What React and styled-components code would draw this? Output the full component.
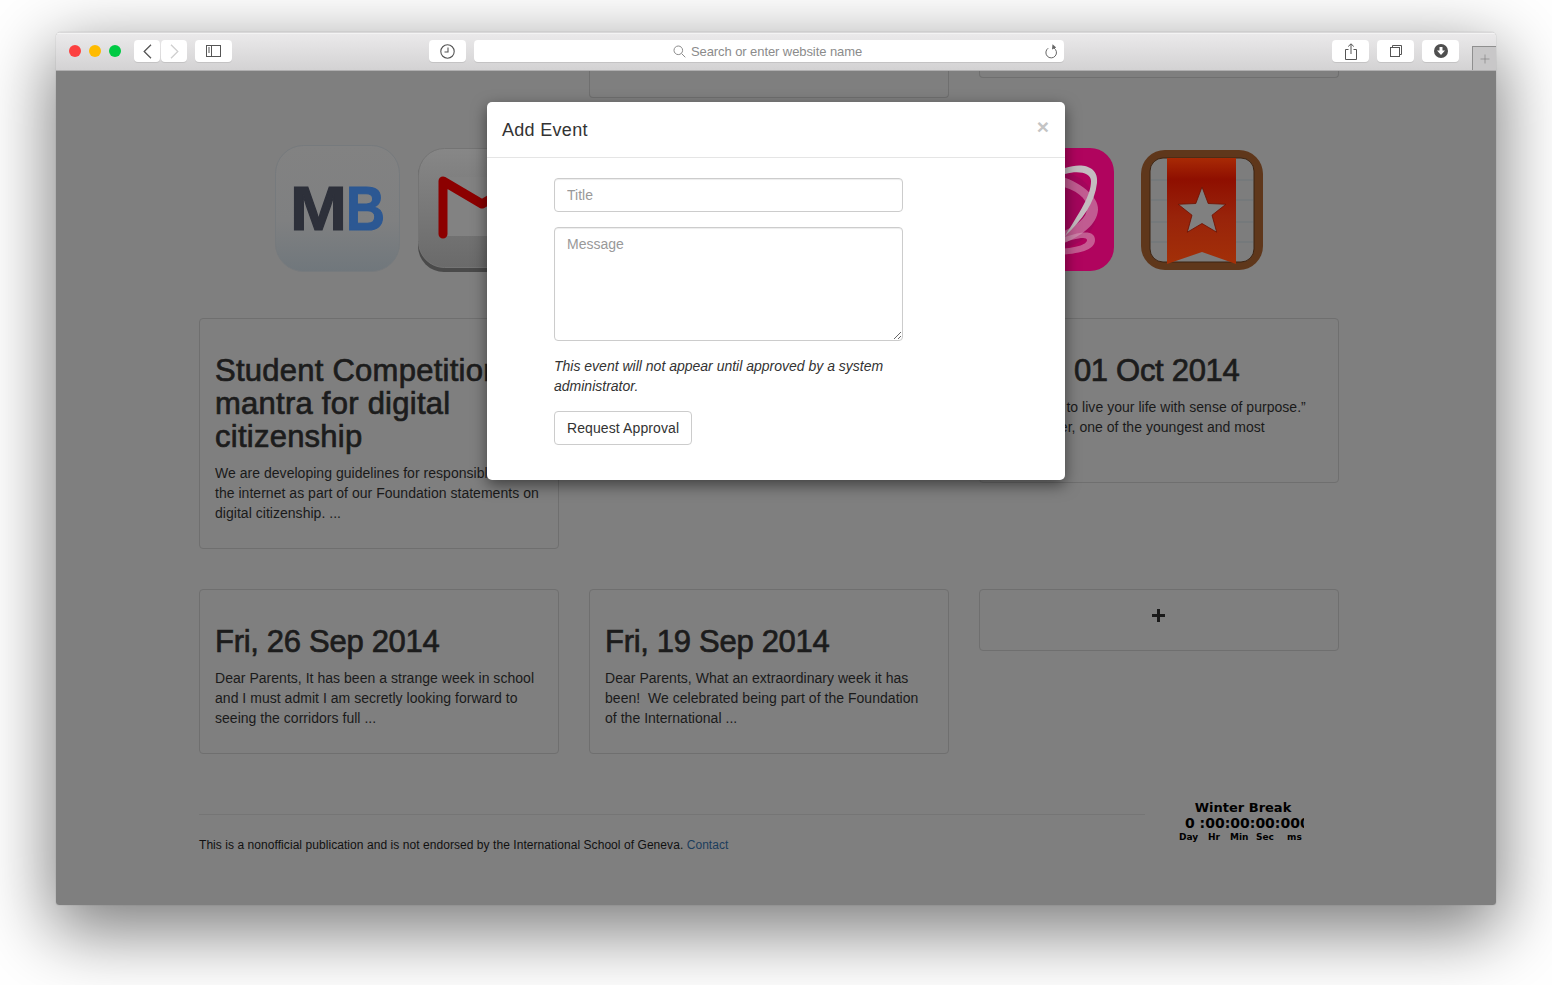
import styled, { createGlobalStyle } from "styled-components";
import { Plus } from "lucide-react";

const GlobalStyle = createGlobalStyle`
html,body{margin:0;padding:0;background:#fff;}
body{font-family:"Liberation Sans",Arial,sans-serif;}
`

const Page = styled.div`
width:1552px;
height:985px;
box-sizing:border-box;
padding:32px 56px 0;
overflow:hidden;
background:#fff;
`

const Window = styled.div`
width:1440px;
height:873px;
display:flex;
flex-direction:column;
border-radius:5px 5px 3px 3px;
box-shadow:0 22px 70px 4px rgba(0,0,0,.52), 0 0 1px rgba(0,0,0,.4);
overflow:hidden;
position:relative;
`

const TitleBar = styled.div`
height:39px;
flex:none;
box-sizing:border-box;
display:flex;
align-items:center;
padding:0 0 1px 13px;
background:linear-gradient(#ebeaeb,#d3d2d3);
border-top:1px solid #d9d8d9;
box-shadow:inset 0 1px 0 #f3f3f3;
border-bottom:1px solid #b0afb0;
`

const Lights = styled.div`
display:flex;
gap:8px;
margin-right:13px;
`

const Light = styled.span`
width:12px;
height:12px;
border-radius:50%;
background:${props=>props.color};
`

const ToolButton = styled.div`
width:${props=>props.w || 37}px;
height:22px;
margin-left:${props=>props.ml || 0}px;
display:flex;
align-items:center;
justify-content:center;
background:#fff;
border-radius:4px;
box-shadow:0 1px 0 #c4c3c4;
flex:none;
`

const UrlBar = styled.div`
width:590px;
height:22px;
margin-left:8px;
box-sizing:border-box;
padding-right:6px;
display:flex;
align-items:center;
background:#fff;
border-radius:4px;
box-shadow:0 1px 0 #c4c3c4;
flex:none;
`

const UrlText = styled.div`
flex:1;
display:flex;
align-items:center;
justify-content:center;
gap:5px;
padding-left:16px;
font-size:13px;
letter-spacing:-.08px;
color:#8b8b8b;
`

const NewTab = styled.div`
width:24px;
height:24px;
margin:0 0 -1px 13px;
align-self:flex-end;
box-sizing:border-box;
border-left:1px solid #8f8f8f;
border-top:1px solid #8f8f8f;
background:#c8c7c8;
display:flex;
align-items:center;
justify-content:center;
color:#777;
flex:none;
`

const Content = styled.div`
flex:1;
position:relative;
overflow:hidden;
background:#7f7f7f;
color:#111;
`

const Wrapper = styled.div`
width:1140px;
margin-left:143px;
`

const Grid = styled.div`
display:grid;
grid-template-columns:repeat(3,360px);
column-gap:30px;
align-items:start;
`

const ScrolledRow = styled(Grid)`
height:40px;
`

const Card = styled.div`
box-sizing:border-box;
border:1px solid #6f6f6f;
border-radius:4px;
padding:35px 15px 25px;
margin-bottom:40px;
`

const StubCard = styled.div`
box-sizing:border-box;
height:60px;
margin-top:${props=>props.top}px;
border:1px solid #6f6f6f;
border-top:0;
border-radius:0 0 4px 4px;
`

const CardTitle = styled.h2`
margin:0 0 10px;
font-size:31px;
line-height:33px;
font-weight:400;
color:#1c1c1c;
-webkit-text-stroke:.7px #1c1c1c;
letter-spacing:${props=>props.spacing || "-.3px"};
white-space:nowrap;
`

const CardText = styled.p`
margin:0;
font-size:14px;
line-height:20px;
letter-spacing:.03px;
color:#1a1a1a;
white-space:nowrap;
`

const PlusCard = styled(Card)`
height:62px;
display:flex;
align-items:center;
justify-content:center;
padding:0 1px 9px 0;
`

const IconRow = styled.div`
height:129px;
margin:34px 0 44px;
padding:0 76px;
display:flex;
justify-content:space-between;
align-items:center;
`

const IconGroup = styled.div`
display:flex;
align-items:center;
gap:${props=>props.gap}px;
`

const Footer = styled.div`
display:flex;
justify-content:space-between;
margin-top:20px;
`

const FooterLeft = styled.div`
width:946px;
border-top:1px solid #757575;
padding-top:23px;
font-size:12px;
line-height:14px;
letter-spacing:.06px;
color:#111;
`

const FooterLink = styled.a`
color:#1b3d5c;
`

const Countdown = styled.div`
width:125px;
margin:-14px 35px 0 0;
overflow:hidden;
font-family:"DejaVu Sans",Verdana,sans-serif;
font-weight:700;
color:#000;
white-space:nowrap;
text-align:center;
`

const CountTitle = styled.div`
font-size:13px;
line-height:15px;
padding-left:3px;
`

const CountValue = styled.div`
font-size:14px;
line-height:16px;
text-align:left;
padding-left:6px;
`

const CountLabels = styled.div`
margin-top:1px;
font-size:9px;
line-height:11px;
display:flex;
text-align:left;
`

const CountLabel = styled.span`
width:${props=>props.w}px;
`

const Modal = styled.div`
position:absolute;
left:431px;
top:31px;
width:578px;
height:378px;
background:#fff;
border-radius:5px;
box-shadow:0 5px 15px rgba(0,0,0,.5);
color:#333;
`

const ModalHeader = styled.div`
height:56px;
box-sizing:border-box;
border-bottom:1px solid #e5e5e5;
padding:1px 15px 0;
display:flex;
align-items:center;
justify-content:space-between;
`

const ModalTitle = styled.div`
font-size:18px;
letter-spacing:.3px;
color:#333;
`

const Close = styled.div`
font-size:21px;
font-weight:700;
line-height:1;
color:#c4c4c4;
margin:-7px 1px 0 0;
`

const ModalBody = styled.div`
width:349px;
margin-left:67px;
padding-top:20px;
`

const TextInput = styled.input`
display:block;
width:100%;
height:34px;
box-sizing:border-box;
padding:6px 12px;
border:1px solid #ccc;
border-radius:4px;
box-shadow:inset 0 1px 1px rgba(0,0,0,.075);
font:14px "Liberation Sans",Arial,sans-serif;
margin-bottom:15px;
&::placeholder{color:#999;opacity:1;}
`

const TextArea = styled.textarea`
display:block;
width:100%;
height:114px;
box-sizing:border-box;
padding:6px 12px;
border:1px solid #ccc;
border-radius:4px;
box-shadow:inset 0 1px 1px rgba(0,0,0,.075);
font:14px/20px "Liberation Sans",Arial,sans-serif;
margin:0 0 15px;
&::placeholder{color:#999;opacity:1;}
`

const Help = styled.p`
margin:0 0 15px;
font-size:14px;
line-height:20px;
font-style:italic;
color:#333;
`

const Button = styled.button`
height:34px;
box-sizing:border-box;
padding:6px 12px;
background:#fff;
border:1px solid #ccc;
border-radius:4px;
font:14px "Liberation Sans",Arial,sans-serif;
letter-spacing:.1px;
color:#333;
`

const MbIcon = () => (
  <svg width="125" height="129" viewBox="0 0 125 129">
    <defs>
      <linearGradient id="mb" x1="0" y1="0" x2="0" y2="1">
        <stop offset="0" stopColor="#828282"/>
        <stop offset=".6" stopColor="#7f8081"/>
        <stop offset="1" stopColor="#70777c"/>
      </linearGradient>
    </defs>
    <rect x=".5" y=".5" width="124" height="126" rx="28" fill="url(#mb)" stroke="#767a7d"/>
    <text x="15" y="85" fontFamily="Liberation Sans" fontWeight="700" fontSize="63" textLength="57" lengthAdjust="spacingAndGlyphs" fill="#2d303a" stroke="#2d303a" strokeWidth="1.2">M</text>
    <text x="71" y="85" fontFamily="Liberation Sans" fontWeight="700" fontSize="63" textLength="39" lengthAdjust="spacingAndGlyphs" fill="#2c5893" stroke="#2c5893" strokeWidth="1.2">B</text>
  </svg>
)

const GmailIcon = () => (
  <svg width="127" height="124" viewBox="0 0 127 124">
    <defs>
      <linearGradient id="gm" x1="0" y1="0" x2="0" y2="1">
        <stop offset="0" stopColor="#878787"/>
        <stop offset="1" stopColor="#6a6a6a"/>
      </linearGradient>
    </defs>
    <rect y="2" width="127" height="122" rx="26" fill="#4a4a4a"/>
    <rect x=".5" y=".5" width="126" height="119" rx="26" fill="url(#gm)" stroke="#747474"/>
    <rect x="25" y="29" width="78" height="59" fill="#828282"/>
    <path d="M25 86V33L64 56L103 33V86" fill="none" stroke="#8c0000" strokeWidth="9" strokeLinejoin="round" strokeLinecap="round"/>
  </svg>
)

const OrbitIcon = () => (
  <svg width="127" height="123" viewBox="0 0 127 123">
    <rect width="127" height="123" rx="24" fill="#b0045e"/>
    <circle cx="72" cy="62" r="38" fill="#a4065c"/>
    <g fill="#d8a4be" fillOpacity=".55">
      <path d="M70 27C92 33 112 48 111 62C110 76 96 88 70 98L70 86C90 78 100 70 100 60C100 50 90 42 70 37Z"/>
      <path d="M70 92C95 82 108 82 108 92C108 102 92 106 70 107L70 101C88 100 100 97 100 92C100 88 88 90 70 97Z"/>
    </g>
    <path d="M78 20C95 14 112 18 110 35C108 55 95 72 78 88C92 65 104 48 104 33C104 25 92 22 78 26Z" fill="#c4bcc0"/>
  </svg>
)

const WunderIcon = () => (
  <svg width="122" height="120" viewBox="0 0 122 120">
    <defs>
      <linearGradient id="wr" x1="0" y1="0" x2="0" y2="1">
        <stop offset="0" stopColor="#a82a05"/>
        <stop offset=".2" stopColor="#8f0f00"/>
        <stop offset=".55" stopColor="#98230a"/>
        <stop offset="1" stopColor="#a33008"/>
      </linearGradient>
    </defs>
    <rect x="0" y="0" width="122" height="120" rx="24" fill="#5f371b"/>
    <rect x="9" y="8" width="104" height="104" rx="13" fill="#7d7d7d" stroke="#3d2412"/>
    <path d="M10 30H112M10 50H112M10 72H112M10 92H112" stroke="#6f767b"/>
    <path d="M26 8H95V114L61 102L26 114Z" fill="url(#wr)"/>
    <path d="M61 37L67.2 53.5L84.8 54.3L71 65.2L75.7 82.2L61 73.5L46.3 82.2L51 65.2L37.2 54.3L54.8 53.5Z" fill="#808080" stroke="#6d0f00" strokeWidth=".8"/>
  </svg>
)

const BackGlyph = ({ color }) => (
  <svg width="9" height="15" viewBox="0 0 9 15" fill="none" stroke={color} strokeWidth="1.3">
    <path d="M8 .7L1.2 7.5L8 14.3"/>
  </svg>
)

const ForwardGlyph = ({ color }) => (
  <svg width="9" height="15" viewBox="0 0 9 15" fill="none" stroke={color} strokeWidth="1.3">
    <path d="M1 .7L7.8 7.5L1 14.3"/>
  </svg>
)

const SidebarGlyph = () => (
  <svg width="15" height="12" viewBox="0 0 15 12" fill="none" stroke="#555">
    <rect x=".5" y=".5" width="14" height="11"/>
    <path d="M5.5 .5V11.5M2 3H4M2 5H4M2 7H4"/>
  </svg>
)

const ClockGlyph = () => (
  <svg width="15" height="15" viewBox="0 0 15 15" fill="none" stroke="#555" strokeWidth="1.1">
    <circle cx="7.5" cy="7.5" r="6.7"/>
    <path d="M8 3.5V8H4.5"/>
  </svg>
)

const SearchGlyph = () => (
  <svg width="13" height="13" viewBox="0 0 13 13" fill="none" stroke="#8b8b8b" strokeWidth="1">
    <circle cx="5.3" cy="5.3" r="4.3"/>
    <path d="M8.5 8.5L12.3 12.3"/>
  </svg>
)

const ReloadGlyph = () => (
  <svg width="13" height="15" viewBox="0 0 13 15" fill="none">
    <path d="M3.2 4.2A5.3 5.3 0 1 0 9 4.1" stroke="#666" strokeWidth="1"/>
    <path d="M7.5 .3L11.2 3.6L7 5.6Z" fill="#666"/>
  </svg>
)

const ShareGlyph = () => (
  <svg width="12" height="17" viewBox="0 0 12 17" fill="none" stroke="#555">
    <path d="M3.5 6.5H.5V16.5H11.5V6.5H8.5"/>
    <path d="M6 11V1M3.2 3.5L6 .8L8.8 3.5"/>
  </svg>
)

const TabsGlyph = () => (
  <svg width="12" height="12" viewBox="0 0 12 12" fill="none" stroke="#555">
    <rect x=".5" y="2.5" width="9" height="9"/>
    <path d="M2.5 2.5V.5H11.5V9.5H9.5"/>
  </svg>
)

const DownloadGlyph = () => (
  <svg width="14" height="14" viewBox="0 0 14 14">
    <circle cx="7" cy="7" r="7" fill="#4f4f4f"/>
    <path d="M5.5 3H8.5V6.5H11L7 11L3 6.5H5.5Z" fill="#fff"/>
  </svg>
)

const App = () => {
  return (
    <Page>
      <GlobalStyle/>
      <Window>
        <TitleBar>
          <Lights>
            <Light color="#fc4040"/>
            <Light color="#febb00"/>
            <Light color="#00ca44"/>
          </Lights>
          <ToolButton w={26}><BackGlyph color="#555"/></ToolButton>
          <ToolButton w={26} ml={1}><ForwardGlyph color="#cfcfcf"/></ToolButton>
          <ToolButton ml={8}><SidebarGlyph/></ToolButton>
          <ToolButton ml={197}><ClockGlyph/></ToolButton>
          <UrlBar>
            <UrlText><SearchGlyph/>Search or enter website name</UrlText>
            <ReloadGlyph/>
          </UrlBar>
          <ToolButton ml={268}><ShareGlyph/></ToolButton>
          <ToolButton ml={8}><TabsGlyph/></ToolButton>
          <ToolButton ml={8}><DownloadGlyph/></ToolButton>
          <NewTab><Plus size={14} strokeWidth={1}/></NewTab>
        </TitleBar>
        <Content>
          <Wrapper>
            <ScrolledRow>
              <span/>
              <StubCard top={-33}/>
              <StubCard top={-53}/>
            </ScrolledRow>
            <IconRow>
              <IconGroup gap={18}><MbIcon/><GmailIcon/></IconGroup>
              <IconGroup gap={27}><OrbitIcon/><WunderIcon/></IconGroup>
            </IconRow>
            <Grid>
              <Card>
                <CardTitle spacing=".25px">Student Competition<br/>mantra for digital<br/>citizenship</CardTitle>
                <CardText>We are developing guidelines for responsible use of<br/>the internet as part of our Foundation statements on<br/>digital citizenship. ...</CardText>
              </Card>
              <span/>
              <Card>
                <CardTitle>Wed, 01 Oct 2014</CardTitle>
                <CardText>“You ought to live your life with sense of purpose.”<br/>Our speaker, one of the youngest and most<br/>leaders ...</CardText>
              </Card>
              <Card>
                <CardTitle>Fri, 26 Sep 2014</CardTitle>
                <CardText>Dear Parents, It has been a strange week in school<br/>and I must admit I am secretly looking forward to<br/>seeing the corridors full ...</CardText>
              </Card>
              <Card>
                <CardTitle>Fri, 19 Sep 2014</CardTitle>
                <CardText>Dear Parents, What an extraordinary week it has<br/>been!{"\u00a0"} We celebrated being part of the Foundation<br/>of the International ...</CardText>
              </Card>
              <PlusCard>
                <svg width="13" height="13" viewBox="0 0 13 13"><path d="M5 0H8V5H13V8H8V13H5V8H0V5H5Z" fill="#1a1a1a"/></svg>
              </PlusCard>
            </Grid>
            <Footer>
              <FooterLeft>This is a nonofficial publication and is not endorsed by the International School of Geneva. <FooterLink>Contact</FooterLink></FooterLeft>
              <Countdown>
                <CountTitle>Winter Break</CountTitle>
                <CountValue>0 :00:00:00:000</CountValue>
                <CountLabels>
                  <CountLabel w={29}>Day</CountLabel>
                  <CountLabel w={22}>Hr</CountLabel>
                  <CountLabel w={26}>Min</CountLabel>
                  <CountLabel w={31}>Sec</CountLabel>
                  <CountLabel w={17}>ms</CountLabel>
                </CountLabels>
              </Countdown>
            </Footer>
          </Wrapper>
          <Modal>
            <ModalHeader>
              <ModalTitle>Add Event</ModalTitle>
              <Close>×</Close>
            </ModalHeader>
            <ModalBody>
              <TextInput placeholder="Title"/>
              <TextArea placeholder="Message"/>
              <Help>This event will not appear until approved by a system administrator.</Help>
              <Button>Request Approval</Button>
            </ModalBody>
          </Modal>
        </Content>
      </Window>
    </Page>
  )
}

export default App
